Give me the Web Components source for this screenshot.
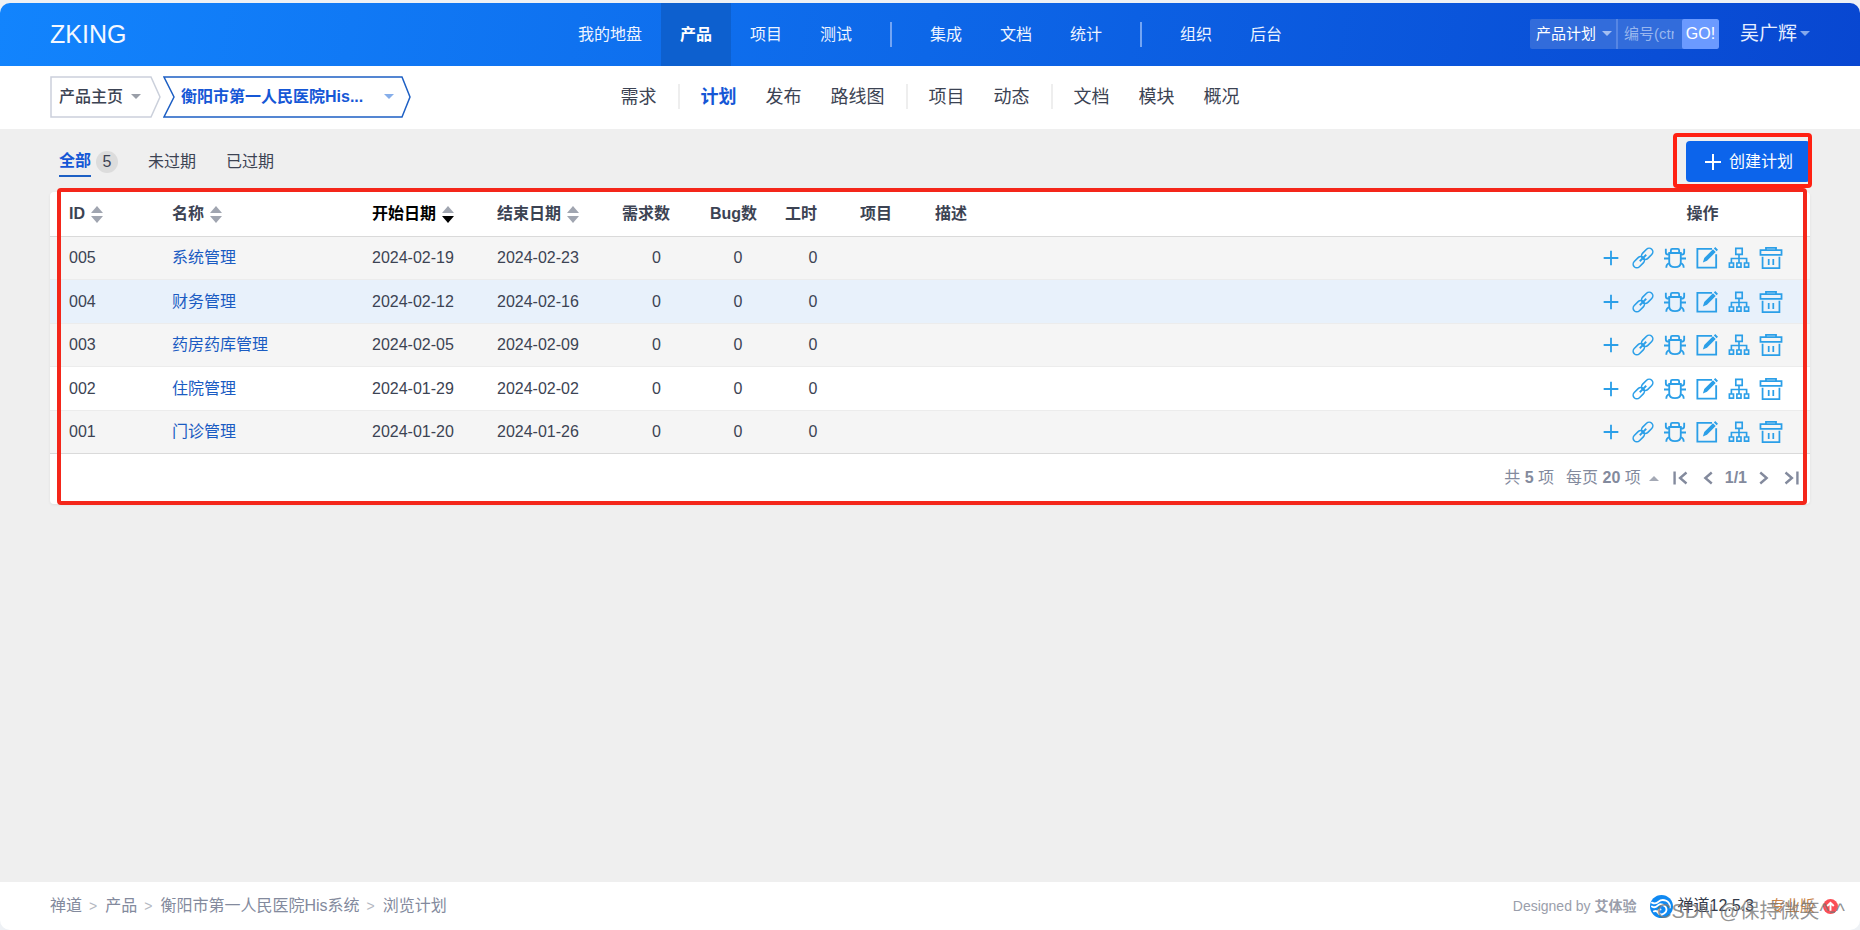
<!DOCTYPE html>
<html lang="zh-CN">
<head>
<meta charset="utf-8">
<title>浏览计划 - 禅道</title>
<style>
html, body { height: 100%; margin: 0; }
body { font: 16px/20px "Liberation Sans", "Noto Sans CJK SC", sans-serif; color: #3c4353; background: #eef1f5; }
</style>
</head>
<body>
<plan-app></plan-app>
<script>
const define = (name, css, html, setup) => {
  const template = document.createElement('template');
  template.innerHTML = `<style>*{box-sizing:border-box}a{color:inherit;text-decoration:none}button,input,select{font:inherit;color:inherit;border:0;margin:0;padding:0;background:none;outline:0}${css}</style>${html}`;
  customElements.define(name, class extends HTMLElement {
    constructor() {
      super();
      this.attachShadow({ mode: 'open' }).append(template.content.cloneNode(true));
    }
    connectedCallback() { if (setup) setup(this, this.shadowRoot); }
  });
};

const glyphs = {
  plus: '<path d="M12 4v16M4 12h16" stroke-width="2"/>',
  link: '<g transform="rotate(-45 12 12)"><rect x="-1.500" y="8" width="14" height="8" rx="4"/><rect x="11.500" y="8" width="14" height="8" rx="4"/><path d="M7 12h10" stroke-width="2"/></g>',
  bug: '<path d="M5.700 6.500h12.600v10Q18.300 22 12 22t-6.300-5.500zM7.500 6V3.500Q7.500 2 9 2h6q1.500 0 1.500 1.500V6M5.700 8.500Q2 8.500 2 6V2M18.300 8.500Q22 8.500 22 6V2M5.700 12.500H0M18.300 12.500H24M6.500 17.500Q2.500 18 2.500 22.500M17.500 17.500Q21.500 18 21.500 22.500" stroke-width="2"/>',
  edit: '<path d="M17.500 2H1.500v20.500h20.500V8" stroke-width="2"/><path d="M7.500 17l1.500-5L18.500 2.500l3 3L12 15z M19.500 1.500l1.500-1.500 3 3-1.500 1.500z" fill="currentColor" stroke="none"/>',
  tree: '<path d="M8.500 1.500h7v6.500h-7zM12 8v4.500M3.700 17.500V12.500h16.600v5M12 12.500v5M1.500 17.500h4.500V22H1.500zM9.700 17.500h4.500V22H9.700zM18 17.500h4.500V22H18z" stroke-width="1.800"/>',
  trash: '<path d="M.5 3.500h23v5H.5zM6.500 3V1h11v2M2.800 10.500v12.500h18.400V10.500M9.500 13v6.500M14.500 13v6.500" stroke-width="1.900"/>',
  first: '<path d="M5 5v14M18 6l-7 6 7 6" stroke-width="2.600"/>',
  prev: '<path d="M15 6l-7 6 7 6" stroke-width="2.600"/>',
  next: '<path d="M9 6l7 6-7 6" stroke-width="2.600"/>',
  last: '<path d="M19 5v14M6 6l7 6-7 6" stroke-width="2.600"/>',
};
define('ui-icon', `:host{display:inline-flex;width:24px;height:24px}svg{width:100%;height:100%;overflow:visible;fill:none;stroke:currentColor;stroke-width:1.700}`,
  `<svg viewBox="0 0 24 24" aria-hidden="true"></svg>`,
  (el, root) => { root.querySelector('svg').innerHTML = glyphs[el.getAttribute('name')]; });

define('ui-caret', `:host{display:inline-block;width:0;height:0;border:5px solid transparent;border-top-color:currentColor;border-bottom:0}:host([up]){border-top:0;border-bottom:5px solid currentColor}`, ``);

define('nav-divider', `:host{display:flex;justify-content:center;width:14px}i{width:2px;height:25px;background:#eee}:host([light]){width:40px}:host([light]) i{background:#73a5f4}`, `<i></i>`);

define('main-link', `:host{display:flex}a{display:flex;align-items:center;padding:0 19px;color:#eef4ff}:host([active]) a{background:#0d60cf;color:#fff;font-weight:700}`, `<a href="#"><slot></slot></a>`);
define('sub-link', `:host{display:block}a{display:block;padding:0 14px;font-size:18px;line-height:24px}:host([active]) a{color:#1557d6;font-weight:700}`, `<a href="#"><slot></slot></a>`);

define('search-box', `
:host{display:block}
form{display:flex;height:30px;border-radius:2px;overflow:hidden;background:#326cdb;font-size:15px}
label{display:flex;align-items:center;width:88px;border-right:2px solid #5686e4;position:relative;color:#fff}
select{appearance:none;width:100%;height:30px;padding-left:6px}
ui-caret{position:absolute;right:4px;color:#a4bff2;pointer-events:none}
input{width:64px;padding:0 8px 0 6px;color:#fff}
input::placeholder{color:#98b6ee;opacity:1}
button{width:37px;background:#6b9aff;color:#fff;border-radius:2px;font-size:16px}`,
`<form><label><select aria-label="搜索范围"><option>产品计划</option></select><ui-caret></ui-caret></label><input aria-label="编号" placeholder="编号(ctrl+g)"><button type="button">GO!</button></form>`);

define('app-header', `
:host{display:grid;grid-template-columns:1fr auto 1fr;height:63px;padding:0 50px;background:linear-gradient(100deg,#1284fd,#0d67e8 50%,#0847d1);border-radius:10px 10px 0 0}
.brand{align-self:center;font-size:25px;line-height:30px;padding-bottom:2px;color:#f4f8ff}
nav{display:flex}nav nav-divider{align-self:center}
.tools{display:flex;justify-content:flex-end;align-items:center;gap:21px;padding-bottom:2px}
.user{display:flex;align-items:center;gap:3px;font-size:19px;color:#e6eeff}.user ui-caret{color:#84a8ec}`,
`<a class="brand" href="#">ZKING</a>
<nav aria-label="主导航"><main-link>我的地盘</main-link><main-link active>产品</main-link><main-link>项目</main-link><main-link>测试</main-link><nav-divider light></nav-divider><main-link>集成</main-link><main-link>文档</main-link><main-link>统计</main-link><nav-divider light></nav-divider><main-link>组织</main-link><main-link>后台</main-link></nav>
<div class="tools"><search-box></search-box><a class="user" href="#">吴广辉<ui-caret></ui-caret></a></div>`);

define('crumb-arrows', `
:host{display:flex;gap:2px}
button{position:relative;display:flex;align-items:center;height:42px}
svg{position:absolute;inset:0;width:100%;height:100%;fill:none}
.home{width:111px;padding-left:9px;gap:8px;font-weight:500}.home svg{stroke:#cbd0db;stroke-width:1.500}.home ui-caret{color:#9a9fa8}
.product{justify-content:space-between;width:248px;padding:0 17px 0 18px;color:#1557d6;font-weight:700}.product svg{stroke:#1d5fc4;stroke-width:1.500}.product ui-caret{color:#86aeea}`,
`<button type="button" class="home"><svg viewBox="0 0 111 42"><path d="M101 1H1v40h100l9-20z"/></svg>产品主页<ui-caret></ui-caret></button>
<button type="button" class="product"><svg viewBox="0 0 248 42"><path d="M1 1h238l8 20-8 20H1l10-20z"/></svg>衡阳市第一人民医院His...<ui-caret></ui-caret></button>`);

define('sub-header', `
:host{display:grid;grid-template-columns:1fr auto 1fr;align-items:center;height:63px;padding:0 50px 2px;background:#fff}
nav{display:flex;align-items:center;gap:1px}`,
`<crumb-arrows></crumb-arrows>
<nav aria-label="产品导航"><sub-link>需求</sub-link><nav-divider></nav-divider><sub-link active>计划</sub-link><sub-link>发布</sub-link><sub-link>路线图</sub-link><nav-divider></nav-divider><sub-link>项目</sub-link><sub-link>动态</sub-link><nav-divider></nav-divider><sub-link>文档</sub-link><sub-link>模块</sub-link><sub-link>概况</sub-link></nav>`);

define('plan-toolbar', `
:host{display:flex;justify-content:space-between;align-items:center;height:63px;padding:2px 0 0 9px}
nav{display:flex;align-items:center;gap:30px}
.all{display:flex;align-items:center;gap:5px}
b{color:#1557d6;padding:4px 0;border-bottom:2px solid #1d5fc4}
.all span{width:22px;height:22px;border-radius:11px;background:#dcdcdc;text-align:center;line-height:22px}
.create{position:relative}
.create::after{content:"";position:absolute;inset:-8px -2px -6px -13px;border:4px solid #ff2012;border-radius:4px;pointer-events:none}
button{display:flex;align-items:center;justify-content:center;gap:4px;width:124px;height:41px;padding-right:2px;border-radius:4px;background:#0c64eb;color:#fff}`,
`<nav aria-label="计划筛选"><a class="all" href="#"><b>全部</b><span>5</span></a><a href="#">未过期</a><a href="#">已过期</a></nav>
<div class="create"><button type="button"><ui-icon name="plus"></ui-icon>创建计划</button></div>`);

define('sort-head', `
:host{display:inline-flex}
a{display:flex;align-items:center;gap:6px}
i{display:grid;gap:3px}
ui-caret{color:#a0a5b0;border-left-width:6px;border-right-width:6px}
ui-caret[up]{border-bottom-width:7px}ui-caret:not([up]){border-top-width:7px}
:host([sorted]){color:#000}:host([sorted]) ui-caret:not([up]){color:#000}`,
`<a href="#"><slot></slot><i><ui-caret up></ui-caret><ui-caret></ui-caret></i></a>`);

define('row-actions', `:host{display:flex}button{display:flex;justify-content:center;align-items:center;width:32px;height:32px;color:#2b9fe8}ui-icon{width:22px;height:22px}`,
  [['plus', '添加子计划'], ['link', '关联需求'], ['bug', '关联Bug'], ['edit', '编辑'], ['tree', '分解'], ['trash', '删除']]
    .map(([icon, label]) => `<button type="button" aria-label="${label}"><ui-icon name="${icon}"></ui-icon></button>`).join(''));

const plans = [
  ['005', '系统管理', '2024-02-19', '2024-02-23'],
  ['004', '财务管理', '2024-02-12', '2024-02-16'],
  ['003', '药房药库管理', '2024-02-05', '2024-02-09'],
  ['002', '住院管理', '2024-01-29', '2024-02-02'],
  ['001', '门诊管理', '2024-01-20', '2024-01-26'],
];
define('plan-table', `
:host{display:block}
table{width:100%;table-layout:fixed;border-collapse:separate;border-spacing:0}
th{height:45px;padding:0 8px;text-align:left;border-bottom:1px solid #dadada;font-weight:700}
td{height:43px;padding:0 8px;border-bottom:1px solid #ececec}
tr:nth-child(even) td{height:44px}
tbody tr:nth-child(odd){background:#f5f5f5}
tbody tr.hover{background:#e8f1fb}
tbody tr:last-child td{border-color:#dadada}
th:first-child,td:first-child{padding-left:19px}
td.num{text-align:center;padding-right:11px}
td a{color:#1a5bc2}
th.act{text-align:center}td.act{padding:0}
.id{width:114px}.name{width:200px}.start{width:125px}.end{width:125px}.need{width:88px}.small{width:75px}.ops{width:215px}`,
`<table><colgroup><col class="id"><col class="name"><col class="start"><col class="end"><col class="need"><col class="small"><col class="small"><col class="small"><col><col class="ops"></colgroup>
<thead><tr><th><sort-head>ID</sort-head></th><th><sort-head>名称</sort-head></th><th><sort-head sorted>开始日期</sort-head></th><th><sort-head>结束日期</sort-head></th><th>需求数</th><th>Bug数</th><th>工时</th><th>项目</th><th>描述</th><th class="act">操作</th></tr></thead>
<tbody>${plans.map(([id, name, start, end], i) => `<tr${i === 1 ? ' class="hover"' : ''}><td>${id}</td><td><a href="#">${name}</a></td><td>${start}</td><td>${end}</td><td class="num">0</td><td class="num">0</td><td class="num">0</td><td></td><td></td><td class="act"><row-actions></row-actions></td></tr>`).join('')}</tbody></table>`);

define('page-nav', `
:host{display:flex;justify-content:flex-end;align-items:center;height:50px;padding:0 7px 2px 0;color:#838a9d}
button{display:flex;align-items:center}
.size{margin:0 10px 0 12px;gap:8px}.size ui-caret{color:#a4a9b5}
.step{width:24px;justify-content:center}ui-icon{width:22px;height:22px}
.pages{display:flex;align-items:center;gap:4px}`,
`<span>共 <b>5</b> 项</span><button type="button" class="size"><span>每页 <b>20</b> 项</span><ui-caret up></ui-caret></button>
<div class="pages"><button type="button" class="step" aria-label="首页"><ui-icon name="first"></ui-icon></button><button type="button" class="step" aria-label="上一页"><ui-icon name="prev"></ui-icon></button><b>1/1</b><button type="button" class="step" aria-label="下一页"><ui-icon name="next"></ui-icon></button><button type="button" class="step" aria-label="末页"><ui-icon name="last"></ui-icon></button></div>`);

define('plan-card', `
:host{display:block;position:relative;background:#fff;border-radius:4px;box-shadow:0 1px 3px #0001}
:host::after{content:"";position:absolute;inset:-4px 3px -1px 7px;border:4px solid #f4261a;border-radius:4px;pointer-events:none}`, `<slot></slot>`);

define('app-footer', `
:host{display:flex;justify-content:space-between;align-items:center;height:48px;padding:0 22px 0 50px;background:#fff;border-radius:0 0 10px 10px;color:#838a9d}
ol{display:flex;list-style:none;margin:0;padding:0}
li+li::before{content:">";font-size:14px;color:#b5b9c2;padding:0 8px 0 7px}
.info{position:relative;display:flex;align-items:center}
.by{font-size:14px;color:#9a9eab;margin-right:14px}
.logo{width:23px;height:23px;margin-right:4px}
.version{color:#333a4a}
.pro{font-size:15px;color:#c98245;margin:0 8px 0 16px}
.up{width:15px;height:15px}
.mark{position:absolute;right:-7px;top:4px;font-size:20px;line-height:24px;white-space:nowrap;color:#777c;pointer-events:none}`,
`<ol><li><a href="#">禅道</a></li><li><a href="#">产品</a></li><li><a href="#">衡阳市第一人民医院His系统</a></li><li>浏览计划</li></ol>
<div class="info"><span class="by">Designed by <b>艾体验</b></span>
<svg class="logo" viewBox="0 0 24 24" aria-hidden="true"><circle cx="12" cy="12" r="12" fill="#1089f2"/><path d="M2 8q4 2 7-1t8-1q4 2 4 7M2 12q3 2 6-1t8 1q3 4-1 7t-6-1q-1-3 2-3M4 17q3-1 4 1t4 3" fill="none" stroke="#fff" stroke-width="1.900" stroke-linecap="round"/></svg>
<a class="version" href="#">禅道12.5.3</a><a class="pro" href="#">专业版</a>
<svg class="up" viewBox="0 0 16 16" aria-hidden="true"><circle cx="8" cy="8" r="8" fill="#fa4e56"/><path d="M8 12.500V4M4.500 7.500L8 4l3.500 3.500" fill="none" stroke="#fff" stroke-width="2"/></svg>
<span class="mark">CSDN @保持微笑^-^</span></div>`);

define('plan-app', `
:host{display:flex;flex-direction:column;min-height:100%;padding-top:3px;box-sizing:border-box}
main{flex:1;padding:0 50px;background:#efefef}`,
`<app-header></app-header><sub-header></sub-header><main><plan-toolbar></plan-toolbar><plan-card><plan-table></plan-table><page-nav></page-nav></plan-card></main><app-footer></app-footer>`);
</script>
</body>
</html>
